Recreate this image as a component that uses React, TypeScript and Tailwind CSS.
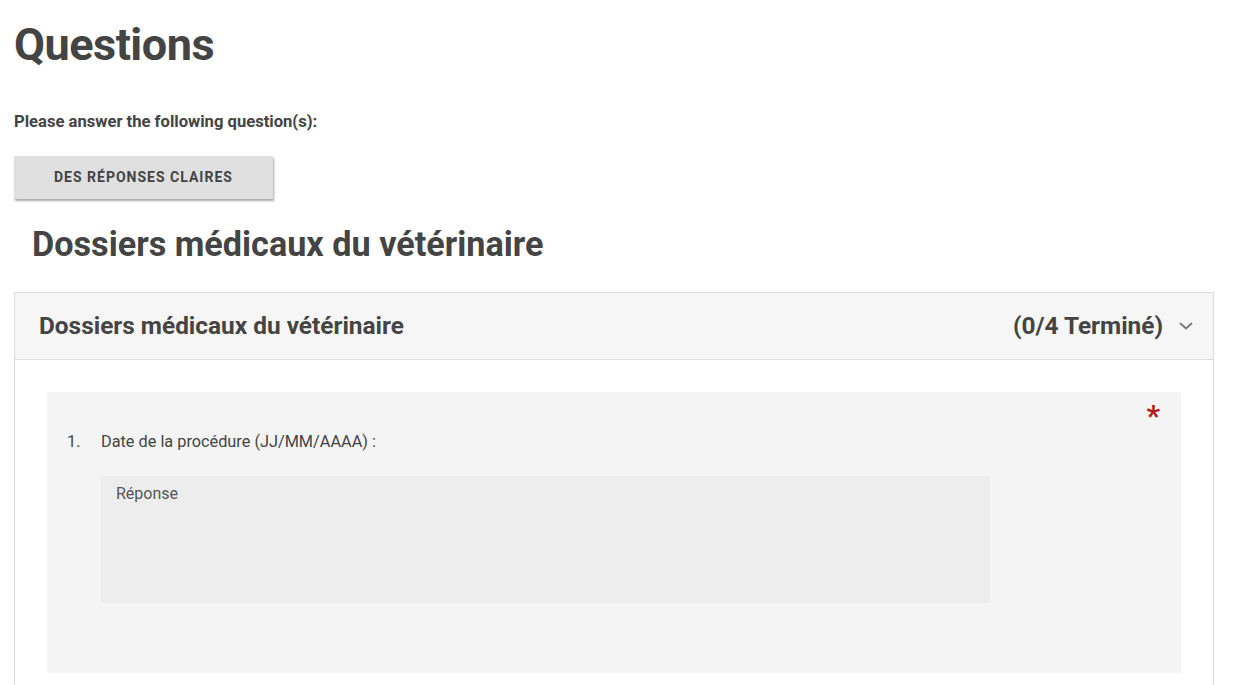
import React from "react";

export default function App() {
  return (
    <div className="min-h-screen bg-white font-['Roboto',sans-serif] text-[#444444]">
      <div className="pl-[14px] pr-[32px]">
        <h1 className="pt-[16px] text-[45px] font-bold leading-[57.6px] tracking-[-0.5px]">
          Questions
        </h1>
        <p className="mt-[38px] text-[16.6px] font-bold leading-[20px]">
          Please answer the following question(s):
        </p>
        <button className="mt-[24px] flex h-[43px] items-center bg-[#e0e0e0] px-[40px] text-[14px] font-bold uppercase tracking-[1px] text-[#444444] shadow-[1px_2px_2px_rgba(0,0,0,0.35)]">
          Des réponses claires
        </button>
        <h2 className="mt-[25px] pl-[18px] text-[34.2px] font-bold leading-[40.8px]">
          Dossiers médicaux du vétérinaire
        </h2>
        <div className="mt-[28px] border border-[#dcdcdc]">
          <div className="flex h-[67px] items-center justify-between border-b border-[#dcdcdc] bg-[#f6f6f6] pl-[24px] pr-[15px]">
            <span className="text-[24.4px] font-bold leading-[30px]">
              Dossiers médicaux du vétérinaire
            </span>
            <div className="flex items-center gap-[11px]">
              <span className="text-[24.4px] font-bold leading-[30px]">(0/4 Terminé)</span>
              <svg width="24" height="24" viewBox="0 0 24 24" fill="none">
                <path d="M6.5 9.5 L12 14.5 L17.5 9.5" stroke="#777777" strokeWidth="1.8" strokeLinecap="round" strokeLinejoin="round" />
              </svg>
            </div>
          </div>
          <div className="bg-white px-[32px] pt-[32px] pb-[40px]">
            <div className="relative rounded-[2px] bg-[#f4f4f4] pt-[38px] pb-[70px] pl-[20px]">
              <span className="absolute right-[21px] top-[9px] text-[30px] font-bold leading-[30px] text-[#b71c1c]">
                *
              </span>
              <div className="flex text-[16.3px] leading-[24px] text-[#444444]">
                <span className="w-[34px]">1.</span>
                <span>Date de la procédure (JJ/MM/AAAA) :</span>
              </div>
              <div className="ml-[34px] mt-[22px] h-[127px] w-[889px] rounded-[2px] bg-[#ededed] pl-[15px] pt-[6px] text-[16px] leading-[24px] text-[#555555]">
                Réponse
              </div>
            </div>
          </div>
        </div>
      </div>
    </div>
  );
}
